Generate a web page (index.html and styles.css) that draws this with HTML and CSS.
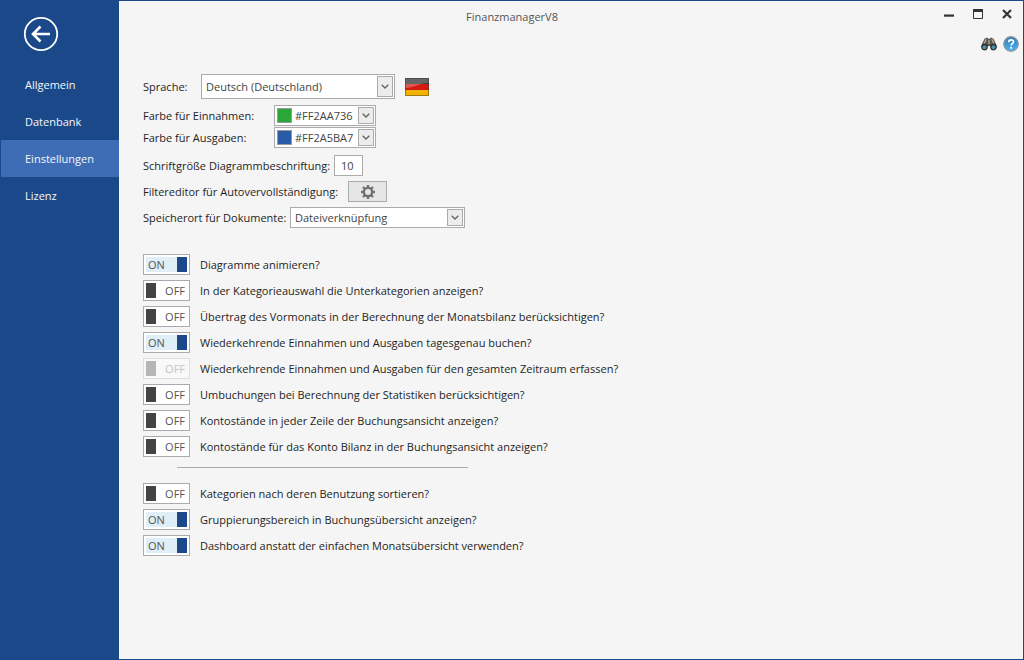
FILE: index.html
```
<!DOCTYPE html>
<html lang="de">
<head>
<meta charset="utf-8">
<title>FinanzmanagerV8</title>
<link rel="stylesheet" href="styles.css">
</head>
<body>
<div class="window">
  <aside class="sidebar">
    <button class="back" type="button" aria-label="Zurück">
      <svg width="36" height="36" viewBox="0 0 36 36" fill="none" stroke="#fff"><circle cx="18" cy="18" r="16.200" stroke-width="1.800"/><path d="M27 18H10M17.500 10.500L10 18l7.500 7.500" stroke-width="2.600"/></svg>
    </button>
    <nav class="nav">
      <a class="nav-item" href="#allgemein">Allgemein</a>
      <a class="nav-item" href="#datenbank">Datenbank</a>
      <a class="nav-item active" href="#einstellungen" aria-current="page">Einstellungen</a>
      <a class="nav-item" href="#lizenz">Lizenz</a>
    </nav>
  </aside>
  <div class="page">
    <div class="tools">
      <div class="tool-row window-buttons">
        <button type="button" aria-label="Minimieren"><svg width="12" height="12" viewBox="0 0 12 12"><path d="M1 6.500h10v2.200H1z" fill="#333"/></svg></button>
        <button type="button" aria-label="Maximieren"><svg width="12" height="12" viewBox="0 0 12 12"><path d="M1.500 2v8.500h9V2" fill="none" stroke="#333"/><path d="M1 1h10v3H1z" fill="#333"/></svg></button>
        <button type="button" aria-label="Schließen"><svg width="12" height="12" viewBox="0 0 12 12"><path d="M2 2l8 8M10 2l-8 8" stroke="#333" stroke-width="2.200"/></svg></button>
      </div>
      <div class="tool-row">
        <button type="button" aria-label="Suchen"><svg width="16" height="14" viewBox="0 0 16 14"><path d="M3.500 1.800L6 .6l1.300 1.200h1.400L10 .6l2.500 1.200L15 7l.8 3-2.300 3.200h-3L9 9H7l-1.500 4.200h-3L.2 10 1 7z" fill="#5a564f"/><path d="M5.200 2.200L3.200 6.500M10.800 2.200l2 4.300M8 3v4" stroke="#b9b0a4" stroke-width="1.200"/><circle cx="3.500" cy="10" r="3.200" fill="#2e2e2e"/><circle cx="12.500" cy="10" r="3.200" fill="#2e2e2e"/><circle cx="3.500" cy="10.300" r="2" fill="#4b93ad"/><circle cx="12.500" cy="10.300" r="2" fill="#4b93ad"/></svg></button>
        <button type="button" aria-label="Hilfe"><svg width="16" height="16" viewBox="0 0 16 16"><defs><linearGradient id="help" x2="0" y2="1"><stop stop-color="#2f79b9"/><stop offset="1" stop-color="#49b4f3"/></linearGradient></defs><circle cx="8" cy="8" r="7.300" fill="url(#help)" stroke="#999" stroke-width="1.200"/><path d="M5.700 6.200c0-3.200 4.800-3.100 4.800-.4C10.500 7.600 8.100 7.600 8.100 9.500" fill="none" stroke="#fff" stroke-width="1.700"/><circle cx="8.100" cy="11.800" r="1.100" fill="#fff"/></svg></button>
      </div>
    </div>
    <form class="settings">
      <div class="row row-language">
        <label class="w-language" for="language">Sprache:</label>
        <span class="combo combo-language"><select id="language"><option>Deutsch (Deutschland)</option></select><svg class="arrow" viewBox="0 0 15 16"><path d="M4 6l3.500 3.500L11 6"/></svg></span>
        <svg class="flag" width="24" height="18" viewBox="0 0 24 18"><path d="M0 0h24v6H0z" fill="#2d2d2d"/><path d="M0 6h24v6H0z" fill="#d21a12"/><path d="M0 12h24v6H0z" fill="#f0b400"/><path d="M0 0h24v5C14 5 9 10 0 10z" fill="#fff" opacity=".27"/><path d="M.5.500h23v17H.5z" fill="none" stroke="#333" opacity=".45"/></svg>
      </div>
      <div class="row row-color">
        <label class="w-color" for="income">Farbe für Einnahmen:</label>
        <span class="combo combo-color"><span class="swatch income"></span><select id="income"><option>#FF2AA736</option></select><svg class="arrow" viewBox="0 0 15 16"><path d="M4 6l3.500 3.500L11 6"/></svg></span>
      </div>
      <div class="row row-expense">
        <label class="w-color" for="expense">Farbe für Ausgaben:</label>
        <span class="combo combo-color"><span class="swatch expense"></span><select id="expense"><option>#FF2A5BA7</option></select><svg class="arrow" viewBox="0 0 15 16"><path d="M4 6l3.500 3.500L11 6"/></svg></span>
      </div>
      <div class="row">
        <label class="w-font" for="fontsize">Schriftgröße Diagrammbeschriftung:</label>
        <input class="number" id="fontsize" type="text" value="10">
      </div>
      <div class="row">
        <label class="w-filter" for="filter">Filtereditor für Autovervollständigung:</label>
        <button class="gear" id="filter" type="button" aria-label="Filtereditor"><svg width="14" height="14" viewBox="0 0 14 14" stroke="#707070" fill="none"><circle cx="7" cy="7" r="4.100" stroke-width="2.200"/><path d="M7 0v2.500M7 11.500V14M0 7h2.500M11.500 7H14M2 2l1.900 1.900M10.100 10.100L12 12M12 2l-1.900 1.900M3.900 10.100L2 12" stroke-width="2.400"/></svg></button>
      </div>
      <div class="row">
        <label class="w-store" for="store">Speicherort für Dokumente:</label>
        <span class="combo combo-store"><select id="store"><option>Dateiverknüpfung</option></select><svg class="arrow" viewBox="0 0 15 16"><path d="M4 6l3.500 3.500L11 6"/></svg></span>
      </div>
      <div class="toggles">
        <label class="toggle"><span class="switch on"><input type="checkbox" checked><span class="state">ON</span><span class="thumb"></span></span>Diagramme animieren?</label>
        <label class="toggle"><span class="switch"><input type="checkbox"><span class="thumb"></span><span class="state">OFF</span></span>In der Kategorieauswahl die Unterkategorien anzeigen?</label>
        <label class="toggle"><span class="switch"><input type="checkbox"><span class="thumb"></span><span class="state">OFF</span></span>Übertrag des Vormonats in der Berechnung der Monatsbilanz berücksichtigen?</label>
        <label class="toggle"><span class="switch on"><input type="checkbox" checked><span class="state">ON</span><span class="thumb"></span></span>Wiederkehrende Einnahmen und Ausgaben tagesgenau buchen?</label>
        <label class="toggle"><span class="switch disabled"><input type="checkbox" disabled><span class="thumb"></span><span class="state">OFF</span></span>Wiederkehrende Einnahmen und Ausgaben für den gesamten Zeitraum erfassen?</label>
        <label class="toggle"><span class="switch"><input type="checkbox"><span class="thumb"></span><span class="state">OFF</span></span>Umbuchungen bei Berechnung der Statistiken berücksichtigen?</label>
        <label class="toggle"><span class="switch"><input type="checkbox"><span class="thumb"></span><span class="state">OFF</span></span>Kontostände in jeder Zeile der Buchungsansicht anzeigen?</label>
        <label class="toggle"><span class="switch"><input type="checkbox"><span class="thumb"></span><span class="state">OFF</span></span>Kontostände für das Konto Bilanz in der Buchungsansicht anzeigen?</label>
      </div>
      <hr class="divider">
      <div class="toggles">
        <label class="toggle"><span class="switch"><input type="checkbox"><span class="thumb"></span><span class="state">OFF</span></span>Kategorien nach deren Benutzung sortieren?</label>
        <label class="toggle"><span class="switch on"><input type="checkbox" checked><span class="state">ON</span><span class="thumb"></span></span>Gruppierungsbereich in Buchungsübersicht anzeigen?</label>
        <label class="toggle"><span class="switch on"><input type="checkbox" checked><span class="state">ON</span><span class="thumb"></span></span>Dashboard anstatt der einfachen Monatsübersicht verwenden?</label>
      </div>
    </form>
  </div>
  <h1 class="title">FinanzmanagerV8</h1>
</div>
</body>
</html>
```
FILE: styles.css
```
* { box-sizing: border-box; }
body {
  margin: 0;
  font: 11px/16px "Open Sans", "Noto Sans", sans-serif;
  color: #1e1e1e;
}
button, input, select { font: inherit; color: inherit; margin: 0; }
button { padding: 0; border: 0; background: none; }
svg { display: block; }

.window {
  position: relative;
  display: flex;
  min-height: 100vh;
  border: 1px solid #1b4889;
  background: #f5f5f5;
}
/* Centred over the whole window, sidebar included */
.title {
  position: absolute;
  top: 8px;
  left: 0;
  right: 0;
  margin: 0;
  font-size: 11px;
  font-weight: 400;
  text-align: center;
  color: #555;
  pointer-events: none;
}

.sidebar { width: 118px; flex: none; background: #1b4889; }
.back { display: block; margin: 15px 0 14px 22px; }
.nav { display: flex; flex-direction: column; }
.nav-item {
  height: 37px;
  padding: 11px 0 0 24px;
  line-height: 16px;
  color: #f4f6fa;
  text-decoration: none;
}
.nav-item.active { background: #3f6db5; }

.page { position: relative; flex: 1; padding: 73px 24px 40px; }
.tools {
  position: absolute;
  top: 7px;
  right: 4px;
  display: flex;
  flex-direction: column;
  align-items: flex-end;
  gap: 16px;
}
.tool-row { display: flex; align-items: center; gap: 6px; }
.window-buttons { gap: 17px; padding-right: 6px; }

.settings { display: flex; flex-direction: column; }
.row { display: flex; align-items: center; min-height: 21px; margin-bottom: 5px; }
.row-language { margin-bottom: 6px; }
.row-color { margin-bottom: 1px; }
.row-expense { margin-bottom: 7px; }
.row label { flex: none; white-space: nowrap; }
.w-language { width: 58px; }
.w-color { width: 131px; }
.w-font { width: 191px; }
.w-filter { width: 205px; }
.w-store { width: 147px; }

.combo {
  display: flex;
  align-items: center;
  height: 21px;
  position: relative;
  border: 1px solid #ababab;
  background: #fff;
  color: #444;
}
.combo select {
  flex: 1;
  min-width: 0;
  height: 100%;
  padding: 0 18px 0 4px;
  border: 0;
  background: none;
  appearance: none;
}
.combo-language { width: 194px; height: 25px; }
.combo-color { width: 102px; }
.combo-color select { padding-left: 3px; }
.combo-store { width: 175px; }
.arrow {
  position: absolute;
  top: 1px;
  right: 1px;
  bottom: 1px;
  width: 16px;
  height: calc(100% - 2px);
  border: 1px solid #ababab;
  background: #ececec;
  fill: none;
  stroke: #666;
  stroke-width: 1.5;
  pointer-events: none;
}
.swatch { flex: none; width: 15px; height: 15px; margin-left: 2px; border: 1px solid #999; }
.income { background: #2aa736; }
.expense { background: #2a5ba7; }
.flag { margin-left: 10px; }
.number { width: 29px; height: 21px; padding: 0 0 0 6px; border: 1px solid #ababab; background: #fff; color: #444; }
.gear {
  display: flex;
  align-items: center;
  justify-content: center;
  width: 39px;
  height: 21px;
  border: 1px solid #ababab;
  background: #e6e6e6;
}

.toggles { display: flex; flex-direction: column; align-items: flex-start; gap: 5px; }
.row + .toggles { margin-top: 21px; }
.toggle { display: flex; align-items: center; gap: 10px; }
.switch {
  position: relative;
  display: flex;
  justify-content: space-between;
  width: 47px;
  height: 21px;
  padding: 2px;
  border: 1px solid #ababab;
  background: #fff;
  color: #555;
}
.switch input { position: absolute; inset: 0; width: 100%; height: 100%; opacity: 0; }
.state { flex: 1; line-height: 15px; padding: 0 2px; text-align: right; }
.thumb { width: 10px; background: #444; }
.on .state { text-align: left; background: #dfeef7; }
.on .thumb { background: #1b4889; }
.disabled { border-color: #ddd; background: #f9f9f9; color: #c4c4c4; }
.disabled .thumb { background: #b6b6b6; }
.divider { width: 291px; height: 1px; margin: 10px 0 15px 34px; border: 0; background: #ababab; }
```
